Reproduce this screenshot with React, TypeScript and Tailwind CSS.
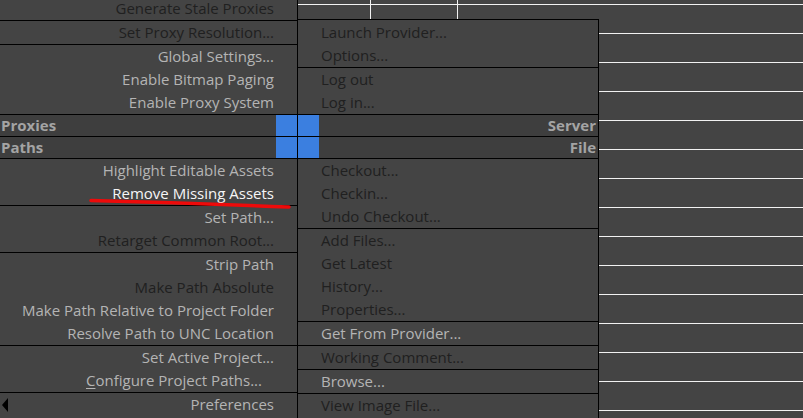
import React from "react";

type Item = { t: React.ReactNode; s?: "on" | "off" | "hi"; pr?: string };

const color = (s?: string) =>
  s === "on" ? "text-[#b4b4b4]" : s === "hi" ? "text-[#f6f6f6]" : "text-[#202020]";

function LeftGroup({ items, pad }: { items: Item[]; pad?: boolean }) {
  return (
    <div className={`border-t border-black ${pad ? "pt-px" : ""}`}>
      {items.map((it, i) => (
        <div
          key={i}
          className={`h-[23px] leading-[23px] text-right whitespace-nowrap ${it.pr ?? "pr-[23px]"} ${color(it.s)}`}
        >
          {it.t}
        </div>
      ))}
    </div>
  );
}

function RightGroup({ items, pad }: { items: Item[]; pad?: boolean }) {
  return (
    <div className={`border-t border-black ${pad ? "pt-px" : ""}`}>
      {items.map((it, i) => (
        <div key={i} className={`h-[23px] leading-[23px] pl-[23px] whitespace-nowrap ${color(it.s)}`}>
          {it.t}
        </div>
      ))}
    </div>
  );
}

function Header({ left, right }: { left: string; right: string }) {
  return (
    <div className="flex h-[22px] border-t border-black bg-[#3e3e3e] font-bold text-[#a4a4a4] leading-[21px]">
      <div className="flex w-[298px] border-r border-black">
        <div className="flex-1 pl-px">{left}</div>
        <div className="w-[21px] bg-[#3b7fe0]" />
      </div>
      <div className="flex w-[301px] border-r border-black">
        <div className="w-[21px] bg-[#3b7fe0]" />
        <div className="flex-1 text-right pr-[2px]">{right}</div>
      </div>
    </div>
  );
}

function Background() {
  const ys: number[] = [];
  for (let y = 33; y < 418; y += 29) ys.push(y);
  return (
    <svg className="absolute inset-0" width="803" height="418" viewBox="0 0 803 418">
      <line x1="298" y1="4.5" x2="803" y2="4.5" stroke="#f2f2f2" strokeWidth="1" />
      <line x1="370.5" y1="0" x2="370.5" y2="418" stroke="#f2f2f2" strokeWidth="1" />
      <line x1="457.5" y1="0" x2="457.5" y2="418" stroke="#f2f2f2" strokeWidth="1" />
      {ys.map((y) => (
        <line key={y} x1="298" y1={y + 0.5} x2="803" y2={y + 0.5} stroke="#f2f2f2" strokeWidth="1" />
      ))}
    </svg>
  );
}

export default function App() {
  return (
    <div
      className="relative w-[803px] h-[418px] overflow-hidden bg-[#444444] text-[15px]"
      style={{ fontFamily: '"Open Sans", "Noto Sans", sans-serif' }}
    >
      <Background />
      <div className="absolute left-0 top-[-4px] w-[599px] flex flex-col">
        <div className="flex items-end">
          <div className="w-[298px] border-r border-black bg-[#444444]">
            <LeftGroup items={[{ t: "Generate Stale Proxies" }]} />
            <LeftGroup items={[{ t: "Set Proxy Resolution..." }]} />
            <LeftGroup
              items={[
                { t: "Global Settings...", s: "on" },
                { t: "Enable Bitmap Paging", s: "on" },
                { t: "Enable Proxy System", s: "on" },
              ]}
            />
          </div>
          <div className="w-[301px] border-r border-black bg-[#444444]">
            <RightGroup pad items={[{ t: "Launch Provider..." }, { t: "Options..." }]} />
            <RightGroup items={[{ t: "Log out" }, { t: "Log in..." }]} />
          </div>
        </div>
        <Header left="Proxies" right="Server" />
        <Header left="Paths" right="File" />
        <div className="flex items-start">
          <div className="w-[298px] border-r border-black bg-[#444444] h-[270px]">
            <LeftGroup
              items={[
                { t: "Highlight Editable Assets", s: "on" },
                { t: "Remove Missing Assets", s: "hi" },
              ]}
            />
            <LeftGroup items={[{ t: "Set Path...", s: "on" }, { t: "Retarget Common Root..." }]} />
            <LeftGroup
              items={[
                { t: "Strip Path", s: "on" },
                { t: "Make Path Absolute" },
                { t: "Make Path Relative to Project Folder", s: "on" },
                { t: "Resolve Path to UNC Location", s: "on" },
              ]}
            />
            <LeftGroup
              items={[
                { t: "Set Active Project...", s: "on" },
                {
                  t: (
                    <>
                      <span className="underline underline-offset-2">C</span>onfigure Project Paths...
                    </>
                  ),
                  s: "on",
                  pr: "pr-[35px]",
                },
              ]}
            />
            <div className="relative border-t border-black">
              <div className="absolute left-[2px] top-[5px] w-0 h-0 border-y-[7px] border-y-transparent border-r-[6px] border-r-black" />
              <div className="h-[23px] leading-[23px] text-right pr-[23px] text-[#b4b4b4]">Preferences</div>
            </div>
          </div>
          <div className="w-[301px] border-r border-black bg-[#444444] h-[270px]">
            <RightGroup items={[{ t: "Checkout..." }, { t: "Checkin..." }, { t: "Undo Checkout..." }]} />
            <RightGroup
              items={[{ t: "Add Files..." }, { t: "Get Latest" }, { t: "History..." }, { t: "Properties..." }]}
            />
            <RightGroup items={[{ t: "Get From Provider...", s: "on" }]} />
            <RightGroup items={[{ t: "Working Comment..." }]} />
            <RightGroup items={[{ t: "Browse...", s: "on" }]} />
            <RightGroup items={[{ t: "View Image File..." }]} />
          </div>
        </div>
      </div>
      <svg className="absolute inset-0 pointer-events-none" width="803" height="418" viewBox="0 0 803 418">
        <path d="M91 200.5 Q 190 203 289 207" stroke="#ee0a0a" strokeWidth="3.5" fill="none" strokeLinecap="round" />
      </svg>
    </div>
  );
}
